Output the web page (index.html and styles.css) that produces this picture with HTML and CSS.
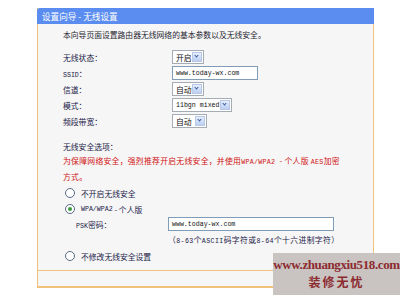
FILE: index.html
```html
<!DOCTYPE html>
<html lang="zh-CN">
<head>
    <meta charset="UTF-8">
    <title>设置向导 - 无线设置</title>
    <link rel="stylesheet" href="styles.css">
</head>
<body>
    <div class="panel">
        <div class="panel-title">设置向导 - 无线设置</div>
        <div class="panel-body">
            <p class="intro">本向导页面设置路由器无线网络的基本参数以及无线安全。</p>

            <div class="form">
                <label>无线状态：</label>
                <span class="select w32"><span>开启</span><i class="arrow"></i></span>
                <label><span class="mono">SSID</span>：</label>
                <span class="input ssid">www.today-wx.com</span>
                <label>信道：</label>
                <span class="select w32"><span>自动</span><i class="arrow"></i></span>
                <label>模式：</label>
                <span class="select w60"><span class="mono">11bgn mixed</span><i class="arrow"></i></span>
                <label>频段带宽：</label>
                <span class="select w35"><span>自动</span><i class="arrow"></i></span>
            </div>

            <p class="section">无线安全选项：</p>
            <p class="warn">为保障网络安全，强烈推荐开启无线安全，并使用<span class="mono">WPA/WPA2 </span>- 个人版 <span class="mono">AES</span>加密<br>方式。</p>

            <div class="radio-row first"><i class="radio"></i>不开启无线安全</div>
            <div class="radio-row"><i class="radio on"></i><span class="mono">WPA/WPA2</span>&nbsp;-&nbsp;个人版</div>
            <div class="psk">
                <label><span class="mono">PSK</span>密码：</label>
                <span class="input psk-input">www.today-wx.com</span>
            </div>
            <div class="hint">（<span class="mono">8-63</span>个<span class="mono">ASCII</span>码字符或<span class="mono">8-64</span>个十六进制字符）</div>
            <div class="radio-row"><i class="radio"></i>不修改无线安全设置</div>
        </div>
        <div class="panel-foot"></div>
    </div>

    <div class="watermark">
        <div class="wm-url">www.zhuangxiu518.com</div>
        <div class="wm-name">装修无忧</div>
    </div>
</body>
</html>
```

FILE: styles.css
```css
body {
    margin: 0;
    background-color: #ffffff;
    font-family: 'Noto Sans CJK SC', 'DejaVu Sans', sans-serif;
    font-size: 7.8px;
    color: #1a2148;
    width: 400px;
    height: 302px;
    overflow: hidden;
    position: relative;
}
p {
    margin: 0;
}
.mono {
    font-family: 'Liberation Mono', monospace;
    font-size: 6.6px;
}
.panel {
    margin: 8px 0 0 37px;
    width: 335px;
    border: 1px solid #f0c27c;
    border-top: none;
    background-color: #f6f6f6;
}
.panel-title {
    height: 16px;
    line-height: 16px;
    background-color: #5b8df0;
    color: #ffffff;
    font-size: 8.6px;
    padding-left: 5px;
    margin: 0 -1px;
    border-radius: 3px 0 0 0;
}
.panel-body {
    padding: 4px 0 6px 25px;
}
.intro {
    line-height: 14px;
    color: #1e1e30;
}
.form {
    display: grid;
    grid-template-columns: 109px auto;
    grid-auto-rows: 16px;
    align-items: center;
    justify-items: start;
    margin-top: 7px;
}
.select {
    display: flex;
    align-items: center;
    justify-content: space-between;
    height: 14px;
    box-sizing: border-box;
    background-color: #ffffff;
    border: 1px solid #a5acb5;
    padding-left: 3px;
    color: #111111;
}
.w32 { width: 32px; }
.w35 { width: 35px; }
.w60 { width: 60px; }
.arrow {
    width: 10px;
    height: 10px;
    margin-right: 1px;
    background: linear-gradient(#e6eefb, #bccff2);
    border: 1px solid #b8c8e6;
    box-sizing: border-box;
    position: relative;
}
.arrow::after {
    content: '';
    position: absolute;
    left: 2px;
    top: 1px;
    width: 2px;
    height: 2px;
    border-right: 1.5px solid #3d5fa8;
    border-bottom: 1.5px solid #3d5fa8;
    transform: rotate(45deg);
}
.input {
    display: flex;
    align-items: center;
    height: 14px;
    box-sizing: border-box;
    background-color: #ffffff;
    border: 1px solid #7f9db9;
    padding-left: 3px;
    font-family: 'Liberation Mono', monospace;
    font-size: 6.6px;
    color: #111111;
}
.ssid {
    width: 86px;
}
.section {
    margin-top: 11px;
    line-height: 14px;
}
.warn {
    color: #d01010;
    line-height: 14px;
    letter-spacing: 0.3px;
}
.radio-row {
    display: flex;
    align-items: center;
    height: 16px;
    padding-left: 2px;
}
.radio-row.first {
    margin-top: 1px;
}
.radio {
    width: 8px;
    height: 8px;
    border: 1px solid #5a6a88;
    border-radius: 50%;
    background-color: #ffffff;
    margin-right: 6px;
    position: relative;
}
.radio.on::after {
    content: '';
    position: absolute;
    left: 2px;
    top: 2px;
    width: 4px;
    height: 4px;
    border-radius: 50%;
    background-color: #3a9a3a;
}
.psk {
    display: flex;
    align-items: center;
    height: 14px;
    padding-left: 13px;
}
.psk label {
    width: 92px;
}
.psk-input {
    width: 166px;
}
.hint {
    height: 16px;
    line-height: 16px;
    padding-left: 105px;
    margin-top: 1px;
    letter-spacing: 0.4px;
}
.panel-foot {
    height: 15px;
    border-top: 1px solid #f0c27c;
    border-bottom: 1px solid #f0c27c;
}
.watermark {
    position: absolute;
    left: 273px;
    top: 253px;
    width: 127px;
    height: 42px;
    background-color: #c9c3c1;
    color: #8c2b30;
    text-align: center;
    font-weight: bold;
}
.wm-url {
    font-family: 'Liberation Serif', serif;
    font-size: 13px;
    line-height: 17px;
    margin-top: 3px;
    letter-spacing: -0.4px;
}
.wm-name {
    font-size: 12px;
    line-height: 18px;
    letter-spacing: 2px;
}
```
